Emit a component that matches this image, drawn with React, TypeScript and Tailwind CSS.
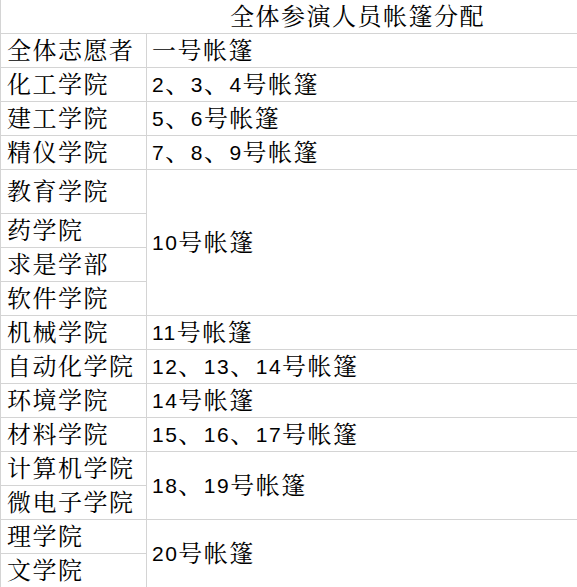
import React from "react";

type Group = { names: string[]; tent: string; tall?: boolean[] };

const groups: Group[] = [
  { names: ["全体志愿者"], tent: "一号帐篷" },
  { names: ["化工学院"], tent: "2、3、4号帐篷" },
  { names: ["建工学院"], tent: "5、6号帐篷" },
  { names: ["精仪学院"], tent: "7、8、9号帐篷" },
  { names: ["教育学院", "药学院", "求是学部", "软件学院"], tent: "10号帐篷", tall: [true] },
  { names: ["机械学院"], tent: "11号帐篷" },
  { names: ["自动化学院"], tent: "12、13、14号帐篷" },
  { names: ["环境学院"], tent: "14号帐篷" },
  { names: ["材料学院"], tent: "15、16、17号帐篷" },
  { names: ["计算机学院", "微电子学院"], tent: "18、19号帐篷" },
  { names: ["理学院", "文学院"], tent: "20号帐篷" },
];

const font = {
  fontFamily:
    '"Liberation Sans", "Noto Serif CJK SC", "Noto Sans CJK SC", sans-serif',
};

// digits are set a bit smaller than the CJK glyphs, as in the sheet
const Tent = ({ text }: { text: string }) => (
  <>
    {text.split(/(\d+)/).map((part, i) =>
      /^\d+$/.test(part) ? (
        <span key={i} className="text-[21px]">
          {part}
        </span>
      ) : (
        <span key={i}>{part}</span>
      )
    )}
  </>
);

export default function App() {
  return (
    <div
      className="w-[577px] h-[587px] overflow-hidden bg-white text-black text-[24px] leading-[26px] tracking-[1.5px] border-l border-[#d4d4d4]"
      style={font}
    >
      <div className="flex h-[34px] items-center border-b border-[#d4d4d4] pl-[229px]">
        全体参演人员帐篷分配
      </div>
      {groups.map((g) => (
        <div key={g.tent} className="flex border-b border-[#d4d4d4]">
          <div className="flex w-[146px] shrink-0 flex-col border-r border-[#d4d4d4]">
            {g.names.map((n, i) => {
              const last = i === g.names.length - 1;
              const tall = g.tall && g.tall[i];
              return (
                <div
                  key={n}
                  className={`flex items-center pl-[6px] ${
                    last
                      ? "h-[33px]"
                      : tall
                      ? "h-[44px] border-b border-[#d4d4d4]"
                      : "h-[34px] border-b border-[#d4d4d4]"
                  }`}
                >
                  {n}
                </div>
              );
            })}
          </div>
          <div className="flex flex-1 items-center pl-[5px]">
            <Tent text={g.tent} />
          </div>
        </div>
      ))}
    </div>
  );
}
